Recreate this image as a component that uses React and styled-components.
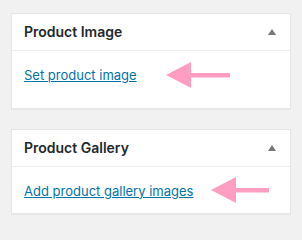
import React from 'react'
import styled, { createGlobalStyle } from 'styled-components'

const GlobalStyle = createGlobalStyle`
    body {
        margin: 0;
        background: #f1f1f1;
        font-family: "Inter", "Liberation Sans", sans-serif;
        color: #23282d;
    }
`

const Page = styled.div`
    display: flex;
    flex-direction: column;
    gap: 20px;
    padding: 13px 11px;
`

const Postbox = styled.div`
    position: relative;
    background: #fff;
    border: 1px solid #e5e5e5;
    box-shadow: 0 1px 1px rgba(0, 0, 0, 0.04);
`

const Header = styled.div`
    display: flex;
    align-items: center;
    justify-content: space-between;
    padding: 8px 12px;
    border-bottom: 1px solid #eee;
    h2 {
        margin: 0;
        font-size: 14px;
        font-weight: 600;
        line-height: 19.6px;
    }
`

const Toggle = styled.span`
    width: 0;
    height: 0;
    margin-right: 2px;
    border-left: 4px solid transparent;
    border-right: 4px solid transparent;
    border-bottom: 6px solid #72777c;
`

const Inside = styled.div`
    padding: ${(p) => p.$pad};
`

const Link = styled.a`
    font-size: 13px;
    line-height: 19.5px;
    color: #0073aa;
    text-decoration: underline;
`

const Arrow = styled.svg`
    position: absolute;
    left: ${(p) => p.$left}px;
    top: ${(p) => p.$top}px;
`

function PinkArrow({ left, top, length }) {
    return (
        <Arrow $left={left} $top={top} width={length} height={26} viewBox={`0 0 ${length} 26`}>
            <polygon points="0,13 25,0 25,26" fill="#ff9ec0" />
            <rect x="24" y="11" width={length - 24} height="4.5" fill="#ff9ec0" />
        </Arrow>
    )
}

export default function App() {
    return (
        <>
            <GlobalStyle />
            <Page>
                <Postbox>
                    <Header>
                        <h2>Product Image</h2>
                        <Toggle />
                    </Header>
                    <Inside $pad="13px 12px 23px">
                        <Link href="#">Set product image</Link>
                    </Inside>
                    <PinkArrow left={154} top={48} length={64} />
                </Postbox>
                <Postbox>
                    <Header>
                        <h2>Product Gallery</h2>
                        <Toggle />
                    </Header>
                    <Inside $pad="13px 12px 12px">
                        <Link href="#">Add product gallery images</Link>
                    </Inside>
                    <PinkArrow left={199} top={47} length={58} />
                </Postbox>
            </Page>
        </>
    )
}
